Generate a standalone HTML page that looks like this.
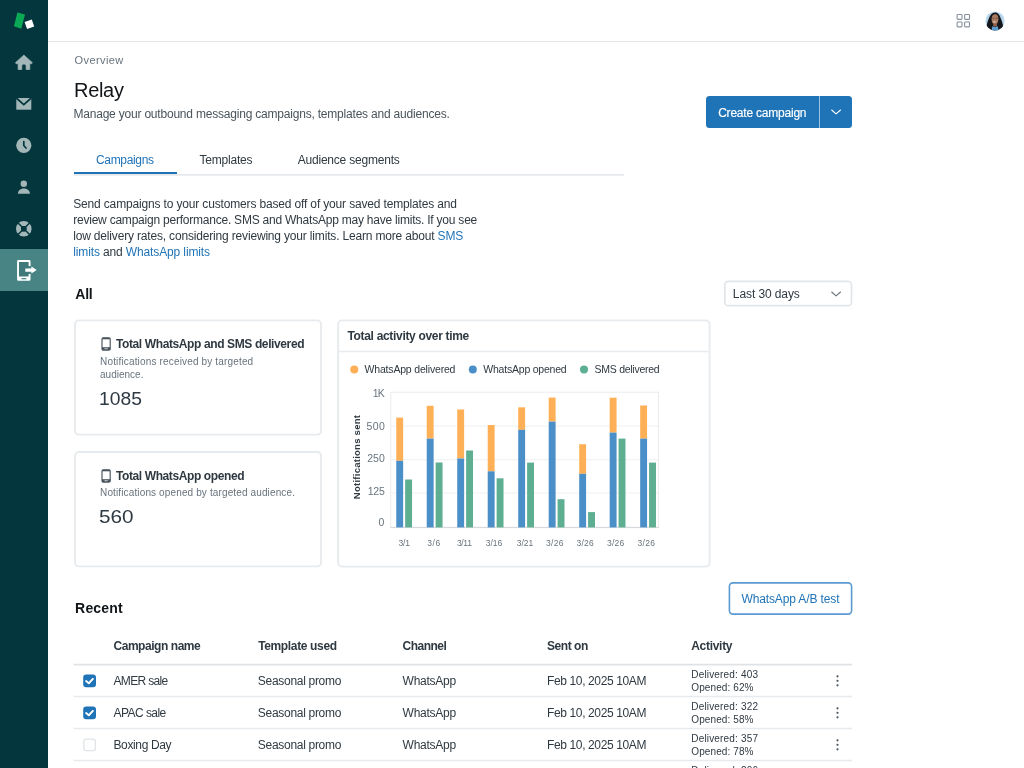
<!DOCTYPE html>
<html lang="en">
<head>
<meta charset="utf-8">
<title>Relay</title>
<style>
*{box-sizing:border-box;margin:0;padding:0}
html,body{width:1024px;height:768px;overflow:hidden;background:#fff}
body{font-family:"Liberation Sans",Arial,sans-serif;color:#2f3941;font-size:12px;position:relative}
.abs{position:absolute}
.tx{position:absolute;white-space:nowrap}
#side{position:absolute;left:0;top:0;width:48px;height:768px;background:#03363d}
#side .active{position:absolute;left:0;top:249.3px;width:48px;height:41.4px;background:#498484}
#side svg{position:absolute;left:0;top:0}
#topbar{position:absolute;left:48px;top:0;width:976px;height:42px;border-bottom:1px solid #e4e7ea;background:#fff}
.card{position:absolute;border:1px solid #d8dcde;border-radius:4px;background:#fff}
.hr{position:absolute;height:1px;background:#d8dcde}
</style>
</head>
<body>

<!-- sidebar -->
<div id="side">
  <div class="active"></div>
  <svg width="48" height="768" viewBox="0 0 48 768">
    <!-- logo -->
    <polygon points="17.4,12.45 25,14.4 21.3,28.85 13.9,26.3" fill="#0aa955"/>
    <polygon points="24.6,22 31.8,19.5 34.2,26.5 27.1,29.05" fill="#ffffff"/>
    <!-- home -->
    <path d="M23.9 55.1 L32.4 62.7 L31.5 63.8 L29.8 63.5 L29.8 69.5 L26.1 69.5 L26.1 65.8 Q26.1 64 23.95 64 Q21.8 64 21.8 65.8 L21.8 69.5 L18.1 69.5 L18.1 63.5 L16.3 63.8 L15.4 62.7 Z" fill="#a3b7b9" stroke="#a3b7b9" stroke-width="0.7" stroke-linejoin="round"/>
    <!-- mail -->
    <rect x="16.3" y="98" width="15" height="11.7" fill="#a3b7b9"/>
    <path d="M16.3 98 L23.8 104.6 L31.3 98" fill="none" stroke="#03363d" stroke-width="1.7"/>
    <!-- clock -->
    <circle cx="23.8" cy="145.3" r="7.6" fill="#a3b7b9"/>
    <path d="M23.8 141.6 V145.5 L26 148" fill="none" stroke="#03363d" stroke-width="1.7" stroke-linecap="round" stroke-linejoin="round"/>
    <!-- person -->
    <circle cx="23.8" cy="183.8" r="3.2" fill="#a3b7b9"/>
    <path d="M17.8 193.7 C18.2 190.3 21 188.6 23.9 188.6 C26.8 188.6 29.6 190.3 30 193.7 Z" fill="#a3b7b9"/>
    <!-- lifebuoy -->
    <circle cx="23.8" cy="228.7" r="5.3" fill="none" stroke="#a3b7b9" stroke-width="5"/>
    <path d="M17.8 222.7 L29.8 234.7 M29.8 222.7 L17.8 234.7" stroke="#03363d" stroke-width="1.5"/>
    <circle cx="23.8" cy="228.7" r="2.7" fill="#03363d"/>
    <!-- phone + arrow -->
    <path d="M18.4 259.9 H29.2 Q30.5 259.9 30.5 261.2 V266 H28.6 V261.9 H19 V276.8 H28.6 V273.9 H30.5 V279.5 Q30.5 280.8 29.2 280.8 H18.4 Q17.1 280.8 17.1 279.5 V261.2 Q17.1 259.9 18.4 259.9 Z" fill="#fff"/>
    <rect x="19" y="261.9" width="9.6" height="14.9" fill="#03363d" opacity="0.13"/>
    <rect x="18.5" y="276.6" width="11" height="3.4" fill="#fff"/>
    <rect x="21.4" y="278.1" width="5" height="1.2" fill="#498484"/>
    <path d="M25.3 268.4 H31.4 V266.6 L36.7 270 L31.4 273.4 V271.7 H25.3 Z" fill="#fff"/>
  </svg>
</div>

<!-- topbar -->
<div id="topbar">
  <svg class="abs" style="left:908px;top:13px" width="15" height="16" viewBox="0 0 15 16" fill="none" stroke="#87929d" stroke-width="1.1">
    <rect x="1.1" y="1.5" width="4.9" height="4.9" rx="0.8"/><rect x="8.6" y="1.5" width="4.9" height="4.9" rx="0.8"/>
    <rect x="1.1" y="9" width="4.9" height="4.9" rx="0.8"/><rect x="8.6" y="9" width="4.9" height="4.9" rx="0.8"/>
  </svg>
  <svg class="abs" style="left:937.4px;top:10.85px" width="20" height="20" viewBox="0 0 20 20">
    <defs><clipPath id="av"><circle cx="10" cy="10" r="9.55"/></clipPath></defs>
    <g clip-path="url(#av)">
      <rect width="20" height="20" fill="#b8d6eb"/>
      <path d="M1.6 20 C1.2 15 2.4 10.8 3.8 7.6 C5 3.8 7 1.4 10 1.4 C13 1.4 14.8 3.8 15.8 7.6 C17.2 10.8 18.6 15 18.2 20 Z" fill="#14161b"/>
      <path d="M6.6 8.2 C6.6 4.6 8.2 3.2 10.2 3.2 C12.3 3.2 13.6 4.8 13.4 8.4 C13.2 11.6 11.8 13.6 10.1 13.6 C8.2 13.6 6.6 11.6 6.6 8.2 Z" fill="#a97b63"/>
      <path d="M8.4 12.4 H11.8 L12.2 15.6 H8 Z" fill="#8e5f49"/>
      <ellipse cx="9.5" cy="10.9" rx="1.3" ry="0.55" fill="#e9d9d0"/>
      <path d="M7.6 7.2 H9.3 M10.8 7.2 H12.5" stroke="#4a2e25" stroke-width="0.7"/>
      <path d="M6.4 20 L7.3 15.3 Q10.1 16.6 12.9 15.3 L13.8 20 Z" fill="#5b9bd0"/>
    </g>
  </svg>
</div>

<!-- create campaign button -->
<div class="abs" style="left:705.5px;top:95.8px;width:146.5px;height:32px;background:#1f73b7;border-radius:3.5px"></div>
<div class="abs" style="left:819.2px;top:95.8px;width:1px;height:32px;background:#9cc3e4"></div>
<svg class="abs" style="left:830px;top:108.3px" width="12" height="8" viewBox="0 0 12 8"><path d="M1.7 2 L6.1 5.9 L10.5 2" fill="none" stroke="#fff" stroke-width="1.1" stroke-linecap="round" stroke-linejoin="round"/></svg>

<!-- tabs -->
<div class="abs" style="left:73.5px;top:171.8px;width:103px;height:2.8px;background:#1f73b7"></div>

<!-- date dropdown -->
<svg class="abs" style="left:830.4px;top:289.7px" width="12" height="8" viewBox="0 0 12 8"><path d="M1.7 2 L6.1 5.9 L10.5 2" fill="none" stroke="#68737d" stroke-width="1.1" stroke-linecap="round" stroke-linejoin="round"/></svg>

<!-- borders overlay -->
<svg class="abs" style="left:0;top:0" width="1024" height="768" viewBox="0 0 1024 768">
<rect x="75" y="320.4" width="246.05" height="114.25" rx="4" fill="none" stroke="#e8ebed" stroke-width="1.9"/>
<rect x="75" y="452" width="246.05" height="114.40" rx="4" fill="none" stroke="#e8ebed" stroke-width="1.9"/>
<rect x="338.1" y="320.4" width="371.50" height="246.20" rx="4" fill="none" stroke="#e8ebed" stroke-width="1.9"/>
<line x1="339" x2="708.7" y1="351.5" y2="351.5" stroke="#e8ebed" stroke-width="1.7"/>
<line x1="73.5" x2="624" y1="174.9" y2="174.9" stroke="#e6e9ec" stroke-width="1.6"/>
<rect x="724.85" y="281.35" width="126.65" height="24.35" rx="3.5" fill="none" stroke="#e2e6e9" stroke-width="1.7"/>
<rect x="729.4" y="582.9" width="122.20" height="31.20" rx="3.5" fill="none" stroke="#5b9bd1" stroke-width="1.6"/>
</svg>
<!-- stat cards -->
<svg class="abs" style="left:101.4px;top:337.2px" width="10" height="14" viewBox="0 0 10 14"><rect x="1" y="0.8" width="8.2" height="12.4" rx="1.5" fill="none" stroke="#49545c" stroke-width="1.15"/><rect x="1" y="0.8" width="8.2" height="1.5" fill="#49545c"/><rect x="1" y="10.2" width="8.2" height="2.8" fill="#49545c"/><rect x="3.5" y="11" width="3.2" height="1.3" fill="#aeb6bc"/></svg>
<svg class="abs" style="left:101.4px;top:468.7px" width="10" height="14" viewBox="0 0 10 14"><rect x="1" y="0.8" width="8.2" height="12.4" rx="1.5" fill="none" stroke="#49545c" stroke-width="1.15"/><rect x="1" y="0.8" width="8.2" height="1.5" fill="#49545c"/><rect x="1" y="10.2" width="8.2" height="2.8" fill="#49545c"/><rect x="3.5" y="11" width="3.2" height="1.3" fill="#aeb6bc"/></svg>

<!-- chart card -->
<svg class="abs" style="left:338px;top:352px" width="372" height="214" viewBox="338 352 372 214">
<circle cx="354.25" cy="369.6" r="4" fill="#ffb057"/>
<circle cx="472.8" cy="369.6" r="4" fill="#4b8fc9"/>
<circle cx="584" cy="369.6" r="4" fill="#5eae91"/>
<rect x="390.75" y="392.2" width="267.8" height="135" fill="#fff" stroke="#e9ebed" stroke-width="1"/>
<line x1="391" x2="658.3" y1="426" y2="426" stroke="#eef0f1" stroke-width="1"/>
<line x1="391" x2="658.3" y1="459.7" y2="459.7" stroke="#eef0f1" stroke-width="1"/>
<line x1="391" x2="658.3" y1="493" y2="493" stroke="#eef0f1" stroke-width="1"/>
<line x1="390.3" x2="659" y1="527.6" y2="527.6" stroke="#d3d8dc" stroke-width="1"/>
<rect x="396.25" y="417.6" width="6.9" height="43.2" fill="#ffb057"/>
<rect x="396.25" y="460.8" width="6.9" height="66.6" fill="#4b8fc9"/>
<rect x="405.15" y="479.5" width="6.9" height="47.9" fill="#5eae91"/>
<rect x="426.74" y="405.8" width="6.9" height="32.8" fill="#ffb057"/>
<rect x="426.74" y="438.6" width="6.9" height="88.8" fill="#4b8fc9"/>
<rect x="435.64" y="462.5" width="6.9" height="64.9" fill="#5eae91"/>
<rect x="457.23" y="409.5" width="6.9" height="49.0" fill="#ffb057"/>
<rect x="457.23" y="458.5" width="6.9" height="68.9" fill="#4b8fc9"/>
<rect x="466.13" y="450.5" width="6.9" height="76.9" fill="#5eae91"/>
<rect x="487.72" y="425.0" width="6.9" height="46.3" fill="#ffb057"/>
<rect x="487.72" y="471.3" width="6.9" height="56.1" fill="#4b8fc9"/>
<rect x="496.62" y="478.3" width="6.9" height="49.1" fill="#5eae91"/>
<rect x="518.21" y="407.3" width="6.9" height="22.5" fill="#ffb057"/>
<rect x="518.21" y="429.8" width="6.9" height="97.6" fill="#4b8fc9"/>
<rect x="527.11" y="462.6" width="6.9" height="64.8" fill="#5eae91"/>
<rect x="548.70" y="397.6" width="6.9" height="24.0" fill="#ffb057"/>
<rect x="548.70" y="421.6" width="6.9" height="105.8" fill="#4b8fc9"/>
<rect x="557.60" y="499.2" width="6.9" height="28.2" fill="#5eae91"/>
<rect x="579.19" y="444.2" width="6.9" height="29.6" fill="#ffb057"/>
<rect x="579.19" y="473.8" width="6.9" height="53.6" fill="#4b8fc9"/>
<rect x="588.09" y="512.1" width="6.9" height="15.3" fill="#5eae91"/>
<rect x="609.68" y="397.7" width="6.9" height="34.9" fill="#ffb057"/>
<rect x="609.68" y="432.6" width="6.9" height="94.8" fill="#4b8fc9"/>
<rect x="618.58" y="438.6" width="6.9" height="88.8" fill="#5eae91"/>
<rect x="640.17" y="405.5" width="6.9" height="33.1" fill="#ffb057"/>
<rect x="640.17" y="438.6" width="6.9" height="88.8" fill="#4b8fc9"/>
<rect x="649.07" y="462.6" width="6.9" height="64.8" fill="#5eae91"/>
</svg>
<div class="tx" style="left:314px;top:452px;width:86px;text-align:center;font-size:9.5px;line-height:10px;font-weight:bold;color:#2f3941;transform:rotate(-90deg);transform-origin:50% 50%;will-change:transform;letter-spacing:0.26px">Notifications sent</div>

<!-- WhatsApp A/B button -->

<!-- table shapes -->
<svg class="abs" style="left:0;top:0" width="1024" height="768" viewBox="0 0 1024 768">
<line x1="73.5" x2="852" y1="664.6" y2="664.6" stroke="#dfe3e6" stroke-width="1.6"/>
<line x1="73.5" x2="852" y1="696.6" y2="696.6" stroke="#e8ebed" stroke-width="1.5"/>
<line x1="73.5" x2="852" y1="728.6" y2="728.6" stroke="#e8ebed" stroke-width="1.5"/>
<line x1="73.5" x2="852" y1="760.6" y2="760.6" stroke="#e8ebed" stroke-width="1.5"/>
<line x1="73.5" x2="852" y1="792.6" y2="792.6" stroke="#e8ebed" stroke-width="1.5"/>
<rect x="83.2" y="674.45" width="12.8" height="12.8" rx="3" fill="#1f73b7"/><path d="M86.10000000000001 681.05 L88.8 683.25 L92.9 678.85" fill="none" stroke="#fff" stroke-width="1.9" stroke-linecap="round" stroke-linejoin="round"/>
<circle cx="837.5" cy="676.35" r="1.1" fill="#49545c"/>
<circle cx="837.5" cy="680.85" r="1.1" fill="#49545c"/>
<circle cx="837.5" cy="685.35" r="1.1" fill="#49545c"/>
<rect x="83.2" y="706.45" width="12.8" height="12.8" rx="3" fill="#1f73b7"/><path d="M86.10000000000001 713.05 L88.8 715.25 L92.9 710.85" fill="none" stroke="#fff" stroke-width="1.9" stroke-linecap="round" stroke-linejoin="round"/>
<circle cx="837.5" cy="708.35" r="1.1" fill="#49545c"/>
<circle cx="837.5" cy="712.85" r="1.1" fill="#49545c"/>
<circle cx="837.5" cy="717.35" r="1.1" fill="#49545c"/>
<rect x="83.8" y="739.05" width="11.6" height="11.6" rx="2.6" fill="#fff" stroke="#e0e4e7" stroke-width="1.3"/>
<circle cx="837.5" cy="740.35" r="1.1" fill="#49545c"/>
<circle cx="837.5" cy="744.85" r="1.1" fill="#49545c"/>
<circle cx="837.5" cy="749.35" r="1.1" fill="#49545c"/>
<rect x="83.8" y="771.05" width="11.6" height="11.6" rx="2.6" fill="#fff" stroke="#e0e4e7" stroke-width="1.3"/>
<circle cx="837.5" cy="772.35" r="1.1" fill="#49545c"/>
<circle cx="837.5" cy="776.85" r="1.1" fill="#49545c"/>
<circle cx="837.5" cy="781.35" r="1.1" fill="#49545c"/>
</svg>

<!-- all text -->
<div id="txt" style="position:absolute;left:0;top:0;width:1024px;height:768px;will-change:transform">
<div class="tx" style="left:74.50px;top:55px;font-size:11px;line-height:11px;font-weight:normal;color:#68737d;letter-spacing:0.414px">Overview</div>
<div class="tx" style="left:74.10px;top:80px;font-size:20px;line-height:20px;font-weight:normal;color:#111518;letter-spacing:-0.335px">Relay</div>
<div class="tx" style="left:73.46px;top:108px;font-size:12px;line-height:12px;font-weight:normal;color:#49545c;letter-spacing:-0.204px">Manage your outbound messaging campaigns, templates and audiences.</div>
<div class="tx" style="left:718.16px;top:107px;font-size:12px;line-height:12px;font-weight:normal;color:#fff;letter-spacing:-0.215px"><span style="-webkit-text-stroke:0.15px #fff">Create campaign</span></div>
<div class="tx" style="left:95.96px;top:154px;font-size:12px;line-height:12px;font-weight:normal;color:#1f73b7;letter-spacing:-0.328px">Campaigns</div>
<div class="tx" style="left:199.46px;top:154px;font-size:12px;line-height:12px;font-weight:normal;color:#2f3941;letter-spacing:-0.203px">Templates</div>
<div class="tx" style="left:297.71px;top:154px;font-size:12px;line-height:12px;font-weight:normal;color:#2f3941;letter-spacing:-0.208px">Audience segments</div>
<div class="tx" style="left:73.21px;top:198px;font-size:12px;line-height:12px;font-weight:normal;color:#2f3941;letter-spacing:-0.157px">Send campaigns to your customers based off of your saved templates and</div>
<div class="tx" style="left:73.21px;top:214px;font-size:12px;line-height:12px;font-weight:normal;color:#2f3941;letter-spacing:-0.224px">review campaign performance. SMS and WhatsApp may have limits. If you see</div>
<div class="tx" style="left:73.21px;top:230px;font-size:12px;line-height:12px;font-weight:normal;color:#2f3941;letter-spacing:-0.173px">low delivery rates, considering reviewing your limits. Learn more about <span style="color:#1f73b7">SMS</span></div>
<div class="tx" style="left:73.21px;top:246px;font-size:12px;line-height:12px;font-weight:normal;color:#2f3941;letter-spacing:-0.129px"><span style="color:#1f73b7">limits</span> and <span style="color:#1f73b7">WhatsApp limits</span></div>
<div class="tx" style="left:75.37px;top:287px;font-size:14px;line-height:14px;font-weight:bold;color:#111518;letter-spacing:-0.315px">All</div>
<div class="tx" style="left:732.86px;top:288px;font-size:12px;line-height:12px;font-weight:normal;color:#2f3941;letter-spacing:-0.097px">Last 30 days</div>
<div class="tx" style="left:115.96px;top:338px;font-size:12px;line-height:12px;font-weight:bold;color:#2f3941;letter-spacing:-0.384px">Total WhatsApp and SMS delivered</div>
<div class="tx" style="left:100.05px;top:357px;font-size:10px;line-height:10px;font-weight:normal;color:#68737d;letter-spacing:0.160px">Notifications received by targeted</div>
<div class="tx" style="left:100.05px;top:370px;font-size:10px;line-height:10px;font-weight:normal;color:#68737d;letter-spacing:0.003px">audience.</div>
<div class="tx" style="left:99.43px;top:391px;font-size:17.5px;line-height:17.5px;font-weight:normal;color:#2f3941;transform:scaleX(1.1027);transform-origin:0 0">1085</div>
<div class="tx" style="left:115.96px;top:470px;font-size:12px;line-height:12px;font-weight:bold;color:#2f3941;letter-spacing:-0.393px">Total WhatsApp opened</div>
<div class="tx" style="left:100.05px;top:488px;font-size:10px;line-height:10px;font-weight:normal;color:#68737d;letter-spacing:0.130px">Notifications opened by targeted audience.</div>
<div class="tx" style="left:99.37px;top:509px;font-size:17.5px;line-height:17.5px;font-weight:normal;color:#2f3941;transform:scaleX(1.1836);transform-origin:0 0">560</div>
<div class="tx" style="left:347.46px;top:330px;font-size:12px;line-height:12px;font-weight:bold;color:#2f3941;letter-spacing:-0.319px">Total activity over time</div>
<div class="tx" style="left:364.53px;top:364px;font-size:10.5px;line-height:10.5px;font-weight:normal;color:#2f3941;letter-spacing:-0.178px">WhatsApp delivered</div>
<div class="tx" style="left:483.28px;top:364px;font-size:10.5px;line-height:10.5px;font-weight:normal;color:#2f3941;letter-spacing:-0.212px">WhatsApp opened</div>
<div class="tx" style="left:594.53px;top:364px;font-size:10.5px;line-height:10.5px;font-weight:normal;color:#2f3941;letter-spacing:-0.261px">SMS delivered</div>
<div class="tx" style="left:75.12px;top:601px;font-size:14px;line-height:14px;font-weight:bold;color:#111518;letter-spacing:0.164px">Recent</div>
<div class="tx" style="left:741.46px;top:593px;font-size:12px;line-height:12px;font-weight:normal;color:#1f73b7;letter-spacing:-0.124px">WhatsApp A/B test</div>
<div class="tx" style="left:113.46px;top:640px;font-size:12px;line-height:12px;font-weight:bold;color:#2f3941;letter-spacing:-0.448px">Campaign name</div>
<div class="tx" style="left:258.16px;top:640px;font-size:12px;line-height:12px;font-weight:bold;color:#2f3941;letter-spacing:-0.355px">Template used</div>
<div class="tx" style="left:402.56px;top:640px;font-size:12px;line-height:12px;font-weight:bold;color:#2f3941;letter-spacing:-0.527px">Channel</div>
<div class="tx" style="left:547.06px;top:640px;font-size:12px;line-height:12px;font-weight:bold;color:#2f3941;letter-spacing:-0.453px">Sent on</div>
<div class="tx" style="left:691.21px;top:640px;font-size:12px;line-height:12px;font-weight:bold;color:#2f3941;letter-spacing:-0.290px">Activity</div>
<div class="tx" style="left:113.46px;top:675px;font-size:12px;line-height:12px;font-weight:normal;color:#2f3941;letter-spacing:-0.650px">AMER sale</div>
<div class="tx" style="left:257.86px;top:675px;font-size:12px;line-height:12px;font-weight:normal;color:#2f3941;letter-spacing:-0.301px">Seasonal promo</div>
<div class="tx" style="left:402.56px;top:675px;font-size:12px;line-height:12px;font-weight:normal;color:#2f3941;letter-spacing:-0.240px">WhatsApp</div>
<div class="tx" style="left:547.06px;top:675px;font-size:12px;line-height:12px;font-weight:normal;color:#2f3941;letter-spacing:-0.377px">Feb 10, 2025 10AM</div>
<div class="tx" style="left:691.30px;top:670px;font-size:10px;line-height:10px;font-weight:normal;color:#2f3941;letter-spacing:0.167px">Delivered: 403</div>
<div class="tx" style="left:691.30px;top:683px;font-size:10px;line-height:10px;font-weight:normal;color:#2f3941;letter-spacing:0.098px">Opened: 62%</div>
<div class="tx" style="left:113.46px;top:707px;font-size:12px;line-height:12px;font-weight:normal;color:#2f3941;letter-spacing:-0.539px">APAC sale</div>
<div class="tx" style="left:257.86px;top:707px;font-size:12px;line-height:12px;font-weight:normal;color:#2f3941;letter-spacing:-0.301px">Seasonal promo</div>
<div class="tx" style="left:402.56px;top:707px;font-size:12px;line-height:12px;font-weight:normal;color:#2f3941;letter-spacing:-0.240px">WhatsApp</div>
<div class="tx" style="left:547.06px;top:707px;font-size:12px;line-height:12px;font-weight:normal;color:#2f3941;letter-spacing:-0.377px">Feb 10, 2025 10AM</div>
<div class="tx" style="left:691.30px;top:702px;font-size:10px;line-height:10px;font-weight:normal;color:#2f3941;letter-spacing:0.167px">Delivered: 322</div>
<div class="tx" style="left:691.30px;top:715px;font-size:10px;line-height:10px;font-weight:normal;color:#2f3941;letter-spacing:0.098px">Opened: 58%</div>
<div class="tx" style="left:113.46px;top:739px;font-size:12px;line-height:12px;font-weight:normal;color:#2f3941;letter-spacing:-0.366px">Boxing Day</div>
<div class="tx" style="left:257.86px;top:739px;font-size:12px;line-height:12px;font-weight:normal;color:#2f3941;letter-spacing:-0.301px">Seasonal promo</div>
<div class="tx" style="left:402.56px;top:739px;font-size:12px;line-height:12px;font-weight:normal;color:#2f3941;letter-spacing:-0.240px">WhatsApp</div>
<div class="tx" style="left:547.06px;top:739px;font-size:12px;line-height:12px;font-weight:normal;color:#2f3941;letter-spacing:-0.377px">Feb 10, 2025 10AM</div>
<div class="tx" style="left:691.30px;top:734px;font-size:10px;line-height:10px;font-weight:normal;color:#2f3941;letter-spacing:0.167px">Delivered: 357</div>
<div class="tx" style="left:691.30px;top:747px;font-size:10px;line-height:10px;font-weight:normal;color:#2f3941;letter-spacing:0.098px">Opened: 78%</div>
<div class="tx" style="left:113.46px;top:771px;font-size:12px;line-height:12px;font-weight:normal;color:#2f3941;letter-spacing:-0.647px">Spring sale</div>
<div class="tx" style="left:257.86px;top:771px;font-size:12px;line-height:12px;font-weight:normal;color:#2f3941;letter-spacing:-0.301px">Seasonal promo</div>
<div class="tx" style="left:402.56px;top:771px;font-size:12px;line-height:12px;font-weight:normal;color:#2f3941;letter-spacing:-0.240px">WhatsApp</div>
<div class="tx" style="left:547.06px;top:771px;font-size:12px;line-height:12px;font-weight:normal;color:#2f3941;letter-spacing:-0.377px">Feb 10, 2025 10AM</div>
<div class="tx" style="left:691.30px;top:766px;font-size:10px;line-height:10px;font-weight:normal;color:#2f3941;letter-spacing:0.167px">Delivered: 206</div>
<div class="tx" style="left:691.30px;top:779px;font-size:10px;line-height:10px;font-weight:normal;color:#2f3941;letter-spacing:0.098px">Opened: 49%</div>
<div class="tx" style="left:372.73px;top:388px;font-size:10.5px;line-height:10.5px;font-weight:normal;color:#68737d;letter-spacing:-0.799px">1K</div>
<div class="tx" style="left:366.53px;top:421px;font-size:10.5px;line-height:10.5px;font-weight:normal;color:#68737d;letter-spacing:0.357px">500</div>
<div class="tx" style="left:367.33px;top:453px;font-size:10.5px;line-height:10.5px;font-weight:normal;color:#68737d;letter-spacing:-0.043px">250</div>
<div class="tx" style="left:367.73px;top:486px;font-size:10.5px;line-height:10.5px;font-weight:normal;color:#68737d;letter-spacing:-0.243px">125</div>
<div class="tx" style="left:378.53px;top:517px;font-size:10.5px;line-height:10.5px;font-weight:normal;color:#68737d;letter-spacing:0.401px">0</div>
<div class="tx" style="left:398.52px;top:539px;font-size:8.5px;line-height:8.5px;font-weight:normal;color:#68737d;letter-spacing:-0.232px">3/1</div>
<div class="tx" style="left:427.22px;top:539px;font-size:8.5px;line-height:8.5px;font-weight:normal;color:#68737d;letter-spacing:0.568px">3/6</div>
<div class="tx" style="left:456.92px;top:539px;font-size:8.5px;line-height:8.5px;font-weight:normal;color:#68737d;letter-spacing:-0.319px">3/11</div>
<div class="tx" style="left:485.82px;top:539px;font-size:8.5px;line-height:8.5px;font-weight:normal;color:#68737d;letter-spacing:-0.061px">3/16</div>
<div class="tx" style="left:516.82px;top:539px;font-size:8.5px;line-height:8.5px;font-weight:normal;color:#68737d;letter-spacing:-0.061px">3/21</div>
<div class="tx" style="left:546.02px;top:539px;font-size:8.5px;line-height:8.5px;font-weight:normal;color:#68737d;letter-spacing:0.273px">3/26</div>
<div class="tx" style="left:576.42px;top:539px;font-size:8.5px;line-height:8.5px;font-weight:normal;color:#68737d;letter-spacing:0.273px">3/26</div>
<div class="tx" style="left:606.92px;top:539px;font-size:8.5px;line-height:8.5px;font-weight:normal;color:#68737d;letter-spacing:0.273px">3/26</div>
<div class="tx" style="left:637.62px;top:539px;font-size:8.5px;line-height:8.5px;font-weight:normal;color:#68737d;letter-spacing:0.273px">3/26</div>
</div>

</body>
</html>
